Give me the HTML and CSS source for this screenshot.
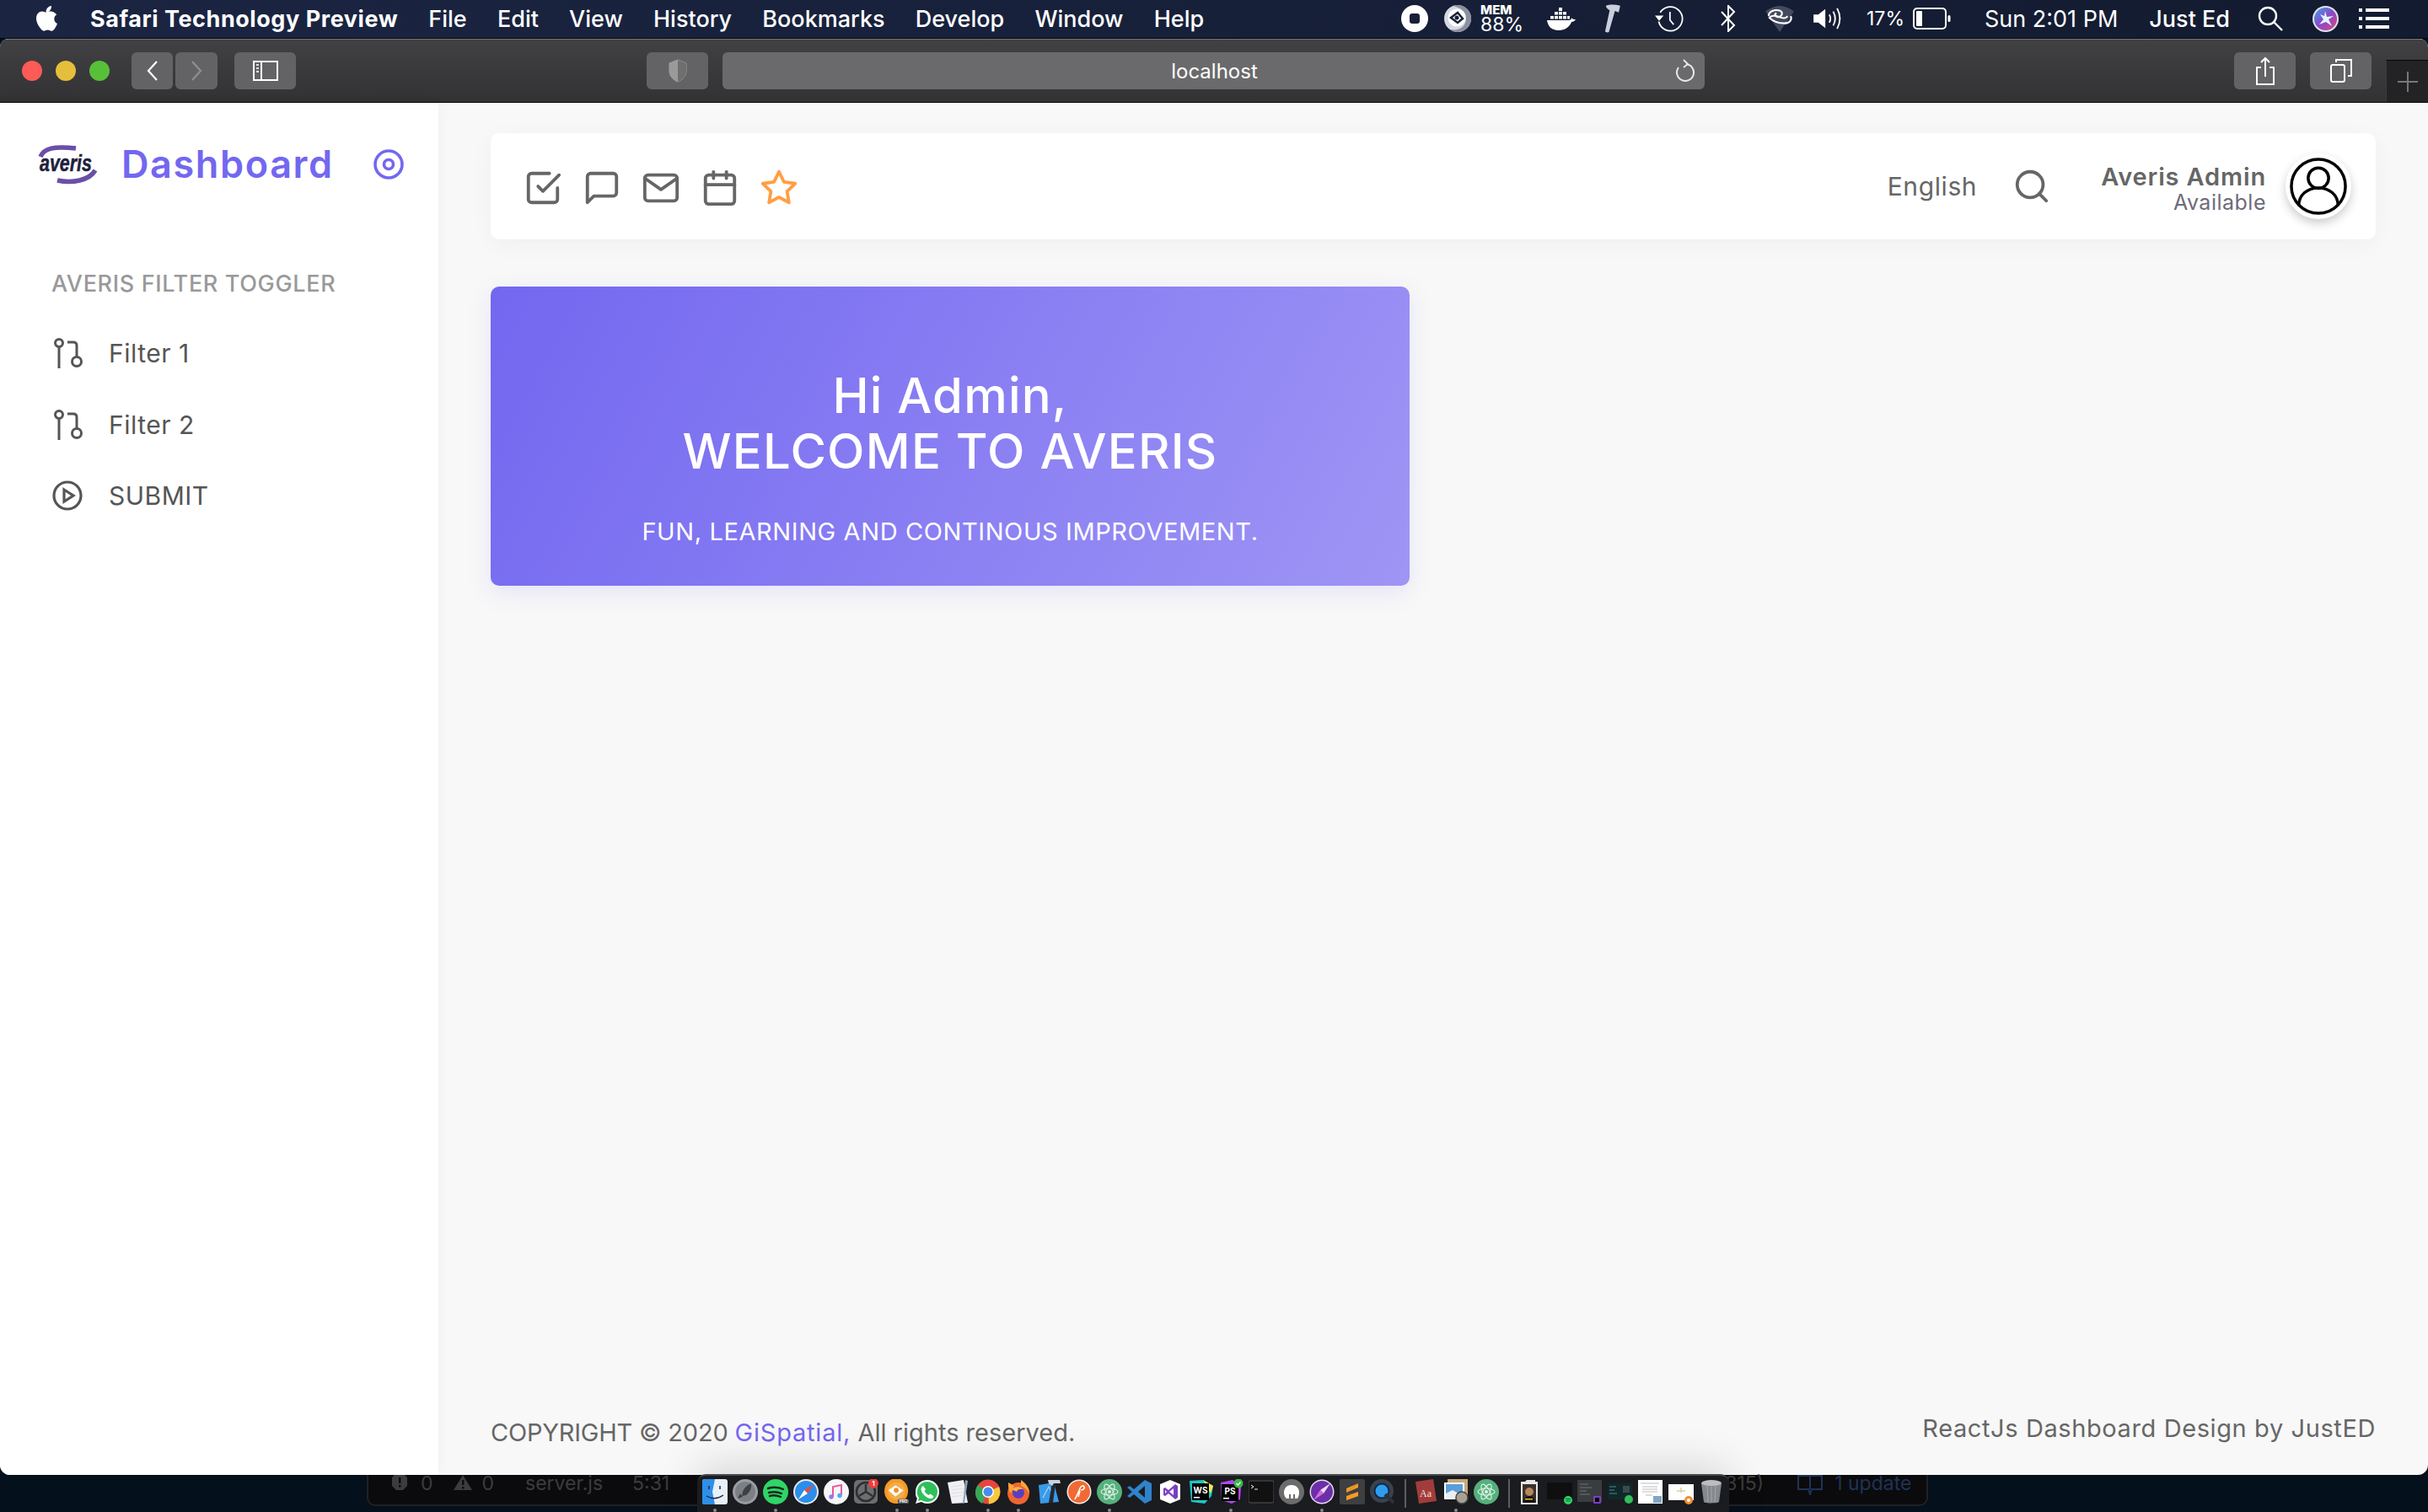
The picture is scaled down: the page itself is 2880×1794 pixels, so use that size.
FILE: index.html
```html
<!DOCTYPE html>
<html lang="en">
<head>
<meta charset="utf-8">
<title>Averis Dashboard</title>
<link rel="stylesheet" href="styles.css">
</head>
<body>
<div class="screen">
  <header class="menubar">
    <svg class="apple" viewBox="0 0 26 32"><path fill="#fff" d="M19 1c.2 2-.5 3.800-1.600 5.200-1.200 1.400-3 2.500-4.800 2.300-.3-1.900.6-3.800 1.600-5C15.400 2 17.400 1 19 1zM25.300 11.300c-1.700 1-3 2.900-3 5.200 0 2.800 1.700 4.700 3.700 5.500-.7 2-1.600 3.800-2.800 5.500-1.100 1.500-2.300 3.200-4.200 3.200-1.800 0-2.400-1.100-4.500-1.100-2.200 0-2.800 1.100-4.500 1.100-1.800 0-3.100-1.700-4.300-3.400C3.700 24.900 1 20.300 1 16c0-5.500 3.500-8.400 7-8.400 1.900 0 3.400 1.200 4.500 1.200 1.100 0 2.900-1.300 5-1.300 1.400 0 4.800.4 7.800 3.800z"/></svg>
    <nav class="menu">
      <span class="menu-app">Safari Technology Preview</span>
      <span>File</span><span>Edit</span><span>View</span><span>History</span><span>Bookmarks</span><span>Develop</span><span>Window</span><span>Help</span>
    </nav>
    <div class="status">
      <svg class="st-stop" viewBox="0 0 32 32"><circle cx="16" cy="16" r="16" fill="#fff"/><rect x="10" y="10" width="12" height="12" rx="3" fill="#182037"/></svg>
      <svg class="st-eye" viewBox="0 0 32 32"><circle cx="16" cy="16" r="16" fill="#d6d9e4"/><path d="M16 0a16 16 0 0 1 0 32c-4 0-7-1-9-3 10 2 19-3 19-13S18 3 10 1c2-1 4-1 6-1z" fill="#8b8f9e"/><circle cx="15" cy="15" r="10.500" fill="#fff"/><path d="M8 15l8-6 6 7-6 5z" fill="none" stroke="#182037" stroke-width="2.500"/><circle cx="15" cy="15" r="2.500" fill="#182037"/></svg>
      <div class="st-mem"><span class="mem-top">MEM</span><span class="mem-val">88%</span></div>
      <svg class="st-docker" viewBox="0 0 36 30"><g fill="#fff"><rect x="15" y="2" width="4" height="4"/><rect x="10" y="7" width="4" height="3.500"/><rect x="15" y="7" width="4" height="3.500"/><rect x="20" y="7" width="4" height="3.500"/><rect x="5" y="12" width="4" height="3.500"/><rect x="10" y="12" width="4" height="3.500"/><rect x="15" y="12" width="4" height="3.500"/><rect x="20" y="12" width="4" height="3.500"/><rect x="25" y="12" width="3" height="3.500"/><path d="M1 17h26c2 0 3-1 3-3 1 2 3 2 5 2-1 2-3 3-5 3-2 6-8 10-15 10-9 0-13-5-14-12z"/></g></svg>
      <svg class="st-hammer" viewBox="0 0 22 38"><path fill="#c9cfdc" d="M3 2c5-2 12-2 19 0l-2 9-5-2-8 28c-2 1-4 0-5-1l6-28C6 7 3 5 3 2z"/></svg>
      <svg class="st-time" viewBox="0 0 37 36" fill="none" stroke="#fff" stroke-width="2"><path d="M7 10a16 16 0 1 1-2 12"/><path d="M0 14l5.500 7 6-7z" fill="#fff" stroke="none"/><path d="M20 9v11l5 6"/></svg>
      <svg class="st-bt" viewBox="0 0 18 32" fill="none" stroke="#fff" stroke-width="2"><path d="M1 8l15 16-7 7V1l7 7L1 24"/></svg>
      <svg class="st-wifi" viewBox="0 0 36 34"><path d="M0 8Q18-6 36 8L18 34z" fill="#444b5e"/><path d="M4 14c0-6 8-9 14-7 5 2 3 8-2 8-4 0-5-4-2-5M32 14c2 5-2 9-8 9-8 0-14-2-19-7 2-3 8-3 12-1 6 2 8 2 11-1" fill="none" stroke="#fff" stroke-width="2.200"/></svg>
      <svg class="st-vol" viewBox="0 0 34 30"><path d="M0 10h6L15 3v24l-9-7H0z" fill="#fff"/><path d="M20 10q3 5 0 10M25 6q5 9 0 18M30 2q7 13 0 26" fill="none" stroke="#fff" stroke-width="2"/></svg>
      <span class="st-pct">17%</span>
      <svg class="st-bat" viewBox="0 0 45 26"><rect x="1" y="1" width="38" height="24" rx="4" fill="none" stroke="#fff" stroke-width="2"/><rect x="4" y="4" width="7" height="18" rx="1" fill="#fff"/><rect x="41.500" y="9" width="3" height="8" rx="1.500" fill="#fff"/></svg>
      <span class="st-clock">Sun 2:01 PM</span>
      <span class="st-user">Just Ed</span>
      <svg class="st-search" viewBox="0 0 30 30" fill="none" stroke="#fff" stroke-width="2.400"><circle cx="12" cy="12" r="10"/><path d="M19 19l10 10"/></svg>
      <svg class="st-siri" viewBox="0 0 31 31"><defs><linearGradient id="siri" x1="0" y1="0" x2="1" y2="1"><stop offset="0" stop-color="#3ea0e8"/><stop offset=".5" stop-color="#8a49c9"/><stop offset="1" stop-color="#e0457f"/></linearGradient></defs><circle cx="15.500" cy="15.500" r="15.500" fill="#dfe3ea"/><circle cx="15.500" cy="15.500" r="13.500" fill="url(#siri)"/><path d="M15 6l2 7 8-1-6 4 4 8-7-5-8 3 5-6-4-6 5 2z" fill="#dff6ff"/></svg>
      <svg class="st-list" viewBox="0 0 36 26" fill="#fff"><rect x="0" y="1" width="4" height="4"/><rect x="0" y="11" width="4" height="4"/><rect x="0" y="21" width="4" height="4"/><rect x="8" y="1" width="28" height="4"/><rect x="8" y="11" width="28" height="4"/><rect x="8" y="21" width="28" height="4"/></svg>
    </div>
  </header>

  <div class="window">
    <div class="toolbar">
      <span class="light light-red"></span><span class="light light-yellow"></span><span class="light light-green"></span>
      <button class="tb tb-back"><svg viewBox="0 0 16 26" fill="none" stroke="#fff" stroke-width="2.200"><path d="M13 2L3 13l10 11"/></svg></button>
      <button class="tb tb-fwd"><svg viewBox="0 0 16 26" fill="none" stroke="#8f8f8f" stroke-width="2.200"><path d="M3 2l10 11L3 24"/></svg></button>
      <button class="tb tb-side"><svg viewBox="0 0 30 24" fill="none" stroke="#fff" stroke-width="2"><rect x="1" y="1" width="28" height="22"/><path d="M10 1v22"/><path d="M4 5h3M4 9h3M4 13h3" stroke="#ddd"/></svg></button>
      <button class="tb tb-shield"><svg viewBox="0 0 22 28"><path d="M11 1l10 4v9c0 7-5 11-10 13C6 25 1 21 1 14V5z" fill="#8e8e8e" stroke="#a5a5a5"/><path d="M11 1v26C6 25 1 21 1 14V5z" fill="#9a9a9a"/><path d="M11 1l10 4v9c0 7-5 11-10 13z" fill="#6f6f6f"/></svg></button>
      <div class="url">
        <span class="url-text">localhost</span>
        <svg class="url-reload" viewBox="0 0 24 28" fill="none" stroke="#e8e8e8" stroke-width="2"><path d="M14 6a10 10 0 1 1-9 4"/><path d="M11 1l5 5-5 4" stroke-width="1.800"/></svg>
      </div>
      <button class="tb tb-share"><svg viewBox="0 0 22 34" fill="none" stroke="#fff" stroke-width="2"><path d="M6 13H1v20h20V13h-5"/><path d="M11 24V2M6 7l5-5 5 5"/></svg></button>
      <button class="tb tb-tabs"><svg viewBox="0 0 26 28" fill="none" stroke="#fff" stroke-width="2"><rect x="1" y="7" width="16" height="20" rx="2"/><path d="M7 4V1h18v19h-4"/></svg></button>
      <div class="newtab"><svg viewBox="0 0 24 24" stroke="#777" stroke-width="2"><path d="M12 0v24M0 12h24"/></svg></div>
    </div>

    <div class="app">
      <aside class="sidebar">
        <div class="brand">
          <svg class="logo" viewBox="0 0 68 48"><path d="M2 15C6 5 18 2 44 5" fill="none" stroke="#6a4fa8" stroke-width="5.500"/><path d="M22 43c18 4 38 0 45-12" fill="none" stroke="#6a4fa8" stroke-width="5.500"/><text x="1" y="32" class="logo-text" textLength="62" lengthAdjust="spacingAndGlyphs">averis</text></svg>
          <span class="brand-name">Dashboard</span>
          <svg class="target" viewBox="0 0 36 36" fill="none" stroke="#7367f0" stroke-width="3.600"><circle cx="18" cy="18" r="16"/><circle cx="18" cy="18" r="5.500"/></svg>
        </div>
        <div class="nav-title">AVERIS FILTER TOGGLER</div>
        <a class="nav-row"><svg class="nav-icon" viewBox="0 0 36 36" fill="none" stroke="#555" stroke-width="3"><circle cx="8" cy="6" r="4.500"/><path d="M8 11v25"/><circle cx="29" cy="28" r="5.500"/><path d="M29 22V9q0-4-4-4h-7"/></svg><span>Filter 1</span></a>
        <a class="nav-row"><svg class="nav-icon" viewBox="0 0 36 36" fill="none" stroke="#555" stroke-width="3"><circle cx="8" cy="6" r="4.500"/><path d="M8 11v25"/><circle cx="29" cy="28" r="5.500"/><path d="M29 22V9q0-4-4-4h-7"/></svg><span>Filter 2</span></a>
        <a class="nav-row"><svg class="nav-icon" viewBox="0 0 36 36" fill="none" stroke="#555" stroke-width="3.200"><circle cx="18" cy="18" r="16"/><path d="M14 11l11 7-11 7z"/></svg><span>SUBMIT</span></a>
      </aside>

      <main class="main">
        <div class="topbar">
          <div class="quick">
            <svg class="feather" viewBox="0 0 24 24"><polyline points="9 11 12 14 22 4"/><path d="M21 12v7a2 2 0 0 1-2 2H5a2 2 0 0 1-2-2V5a2 2 0 0 1 2-2h11"/></svg>
            <svg class="feather" viewBox="0 0 24 24"><path d="M21 15a2 2 0 0 1-2 2H7l-4 4V5a2 2 0 0 1 2-2h14a2 2 0 0 1 2 2z"/></svg>
            <svg class="feather" viewBox="0 0 24 24"><path d="M4 4h16c1.100 0 2 .9 2 2v12c0 1.100-.9 2-2 2H4c-1.100 0-2-.9-2-2V6c0-1.100.9-2 2-2z"/><polyline points="22,6 12,13 2,6"/></svg>
            <svg class="feather" viewBox="0 0 24 24"><rect x="3" y="4" width="18" height="18" rx="2"/><line x1="16" y1="2" x2="16" y2="6"/><line x1="8" y1="2" x2="8" y2="6"/><line x1="3" y1="10" x2="21" y2="10"/></svg>
            <svg class="feather feather-star" viewBox="0 0 24 24"><polygon points="12 2 15.090 8.260 22 9.270 17 14.140 18.180 21.020 12 17.770 5.820 21.020 7 14.140 2 9.270 8.910 8.260 12 2"/></svg>
          </div>
          <div class="top-right">
            <span class="lang">English</span>
            <svg class="feather top-search" viewBox="0 0 24 24"><circle cx="11" cy="11" r="8"/><line x1="21" y1="21" x2="16.650" y2="16.650"/></svg>
            <div class="user">
              <span class="user-name">Averis Admin</span>
              <span class="user-state">Available</span>
            </div>
            <div class="avatar"><svg viewBox="0 0 70 70" fill="none" stroke="#000" stroke-width="3.600"><circle cx="35" cy="35" r="33"/><circle cx="35" cy="25" r="12.500"/><path d="M11 59c0-14 11-22 24-22s24 8 24 22"/></svg></div>
          </div>
        </div>

        <section class="hero">
          <h1 class="hero-title">Hi Admin,<br>WELCOME TO AVERIS</h1>
          <p class="hero-sub">FUN, LEARNING AND CONTINOUS IMPROVEMENT.</p>
        </section>

        <footer class="footer">
          <span class="copy"><span class="copy-lead">COPYRIGHT © 2020 </span><a class="copy-link">GiSpatial,</a> All rights reserved.</span>
          <span class="credit">ReactJs Dashboard Design by JustED</span>
        </footer>
      </main>
    </div>
  </div>

  <div class="desktop">
    <div class="ghost">
      <svg class="g-err" viewBox="0 0 18 18"><path d="M3 0h12l3 3v10l-5 5H5l-5-5V3z" fill="#3c3c3c"/><rect x="8" y="3" width="2.500" height="7" fill="#0c0c0e"/><rect x="8" y="12" width="2.500" height="2.500" fill="#0c0c0e"/></svg>
      <span class="g-n1">0</span>
      <svg class="g-warn" viewBox="0 0 22 18"><path d="M11 0l11 18H0z" fill="#3c3c3c"/><rect x="10" y="6" width="2.500" height="6" fill="#0c0c0e"/><rect x="10" y="14" width="2.500" height="2.500" fill="#0c0c0e"/></svg>
      <span class="g-n2">0</span>
      <span class="g-file">server.js</span>
      <span class="g-pos">5:31</span>
      <span class="g-315">315)</span>
      <svg class="g-book" viewBox="0 0 30 24" fill="none" stroke="#1e3357" stroke-width="2"><path d="M1 1h28v16H17l-2 6-2-6H1zM15 1v16"/></svg>
      <span class="g-up">1 update</span>
    </div>
  </div>

  <div class="dock">
    <div class="slot on"><svg viewBox="0 0 30 30"><rect width="30" height="30" rx="3" fill="#e8f0f8"/><path d="M0 3a3 3 0 0 1 3-3h12l-3 15 3 15H3a3 3 0 0 1-3-3z" fill="#2d8fe8"/><path d="M8 8v4M21 8v4" stroke="#1b2a44" stroke-width="1.500"/><path d="M5 20q10 6 20-1" fill="none" stroke="#1b2a44" stroke-width="1.300"/></svg></div>
    <div class="slot"><svg viewBox="0 0 30 30"><circle cx="15" cy="15" r="15" fill="#9a9ea3"/><circle cx="15" cy="15" r="12" fill="#7c8085"/><path d="M22 5c1 6-2 11-6 14l-5 1 1-5C14 10 17 7 22 5zM9 17l-3 6 6-2z" fill="#3d4045"/></svg></div>
    <div class="slot on"><svg viewBox="0 0 30 30"><circle cx="15" cy="15" r="15" fill="#2fd566"/><path d="M6 11q9-3 18 1M7 16q8-2 15 1M8 20q6-2 13 1" fill="none" stroke="#16291c" stroke-width="2.400" stroke-linecap="round"/></svg></div>
    <div class="slot"><svg viewBox="0 0 30 30"><circle cx="15" cy="15" r="15" fill="#e6eaf0"/><circle cx="15" cy="15" r="13" fill="#2b8eea"/><path d="M24 6l-7 11-4-4z" fill="#f04a3e"/><path d="M6 24l7-11 4 4z" fill="#fff"/></svg></div>
    <div class="slot"><svg viewBox="0 0 30 30"><circle cx="15" cy="15" r="15" fill="#f6f6f8"/><path d="M11 21V9l10-2v12" fill="none" stroke="#e85a9a" stroke-width="2"/><circle cx="9" cy="21" r="2.700" fill="#8a7cf0"/><circle cx="19" cy="19.500" r="2.700" fill="#55a8ee"/></svg></div>
    <div class="slot"><svg viewBox="0 0 30 30"><rect width="28" height="28" y="1" rx="5" fill="#6c6e70"/><circle cx="14" cy="15" r="11" fill="none" stroke="#2e2f31" stroke-width="2.600"/><path d="M14 15V6M14 15L6 20M14 15l8 5" stroke="#2e2f31" stroke-width="2.400"/><circle cx="23" cy="5" r="6" fill="#ee3d3a"/><text x="23" y="8" class="badge-text">1</text></svg></div>
    <div class="slot on"><svg viewBox="0 0 32 32"><ellipse cx="15" cy="15" rx="15" ry="16" fill="#f69a23"/><circle cx="15" cy="15" r="11" fill="#f2ac4c"/><path d="M5 14L14 8l10 6-10 8z" fill="#fff"/><circle cx="15" cy="14" r="3" fill="#ee8f1e"/><rect x="17" y="25" width="14" height="6" rx="2" fill="#55585c"/><text x="24" y="30" class="pro-text">PRO</text></svg></div>
    <div class="slot on"><svg viewBox="0 0 30 30"><path d="M15 1a14 14 0 0 1 0 28c-3 0-5-1-7-2l-7 2 2-6C1 21 1 18 1 15 1 7 7 1 15 1z" fill="#fff"/><path d="M15 3a12 12 0 0 1 0 24c-3 0-5-1-7-2l-4 1 1-4C3 20 3 18 3 15 3 8 8 3 15 3z" fill="#2fc05a"/><path d="M10 8l3 4-1.500 2c1 2 3 4 5 5l2-1.500 4 3c-1 3-4 3-6 2-5-2-8-6-9-10 0-2 1-4 2.500-4.500z" fill="#fff"/></svg></div>
    <div class="slot"><svg viewBox="0 0 30 30"><path d="M3 4l19-3 5 27-19 1z" fill="#f1f1f3"/><path d="M24 1l3 1-4 26-2 1z" fill="#8fa3bd"/><path d="M7 9l14-2M7 13l15-2M8 17l15-2M8 21l15-2" stroke="#dadade" stroke-width=".8"/></svg></div>
    <div class="slot on"><svg viewBox="0 0 30 30"><circle cx="15" cy="15" r="14.500" fill="#e6463d"/><path d="M15 15L28 9a14.500 14.500 0 0 1-12 20.500z" fill="#f6c93c"/><path d="M15 15L8 29A14.500 14.500 0 0 1 3 7z" fill="#3aa757"/><circle cx="15" cy="15" r="7" fill="#fff"/><circle cx="15" cy="15" r="5.500" fill="#4a8bf0"/></svg></div>
    <div class="slot on"><svg viewBox="0 0 30 30"><circle cx="15" cy="17" r="13" fill="#f0652f"/><path d="M18 1c6 4 10 9 10 16-3-5-6-8-10-9zM3 4c0 5 0 9 3 13L10 8z" fill="#ffa436"/><circle cx="15" cy="16" r="7" fill="#5a3fc0"/><path d="M7 12q8-6 14 0-7-1-8 3z" fill="#ffb23c"/></svg></div>
    <div class="slot"><svg viewBox="0 0 30 30"><path d="M3 7l18-3 6 23-22 2z" fill="#3a9ae8"/><path d="M8 22L15 9l6 12" fill="none" stroke="#a8d4f6" stroke-width="1.200"/><path d="M15 28l4-24 4 1-3 23z" fill="#232a33"/><path d="M14 1h14l1 4-8 0-2 3-4-3z" fill="#cbd2da"/></svg></div>
    <div class="slot"><svg viewBox="0 0 30 30"><circle cx="15" cy="15" r="14.500" fill="#f2f2f2"/><circle cx="15" cy="15" r="13" fill="#f26a33"/><path d="M10 24c3-6 5-10 6-13 1-3 4-4 5-2s-1 4-4 4M16 14l-2 7" fill="none" stroke="#fff" stroke-width="1.600"/></svg></div>
    <div class="slot on"><svg viewBox="0 0 30 30"><circle cx="15" cy="15" r="15" fill="#55b07c"/><g fill="none" stroke="#e1f3e8" stroke-width="1.100"><ellipse cx="15" cy="15" rx="10" ry="4" transform="rotate(60 15 15)"/><ellipse cx="15" cy="15" rx="10" ry="4" transform="rotate(-60 15 15)"/><ellipse cx="15" cy="15" rx="10" ry="4"/></g><circle cx="15" cy="15" r="2" fill="#e1f3e8"/></svg></div>
    <div class="slot"><svg viewBox="0 0 30 30"><path d="M21 1l8 4v20l-8 4L8 18l-5 4-3-2 6-5-6-5 3-2 5 4z" fill="#2f83cb"/><path d="M21 8v14l-8-7z" fill="#1b1c1f"/></svg></div>
    <div class="slot"><svg viewBox="0 0 30 30"><path d="M15 1l12 5v18l-12 5-12-5V6z" fill="#fff"/><path d="M21 6l3 2v14l-3 2-8-7-4 3-2-1V11l2-1 4 3z" fill="#7a3fc2"/><path d="M19 11v8l-5-4z" fill="#fff"/><path d="M9 13v4l2-2z" fill="#fff"/></svg></div>
    <div class="slot"><svg viewBox="0 0 30 30"><path d="M2 2l16-1 12 7-2 12-8 9-16-2z" fill="#21c4c6"/><path d="M18 1l12 7-3 9z" fill="#f4e94b"/><rect x="5" y="5" width="20" height="20" fill="#000"/><text x="15" y="17" class="ide-text">WS</text><rect x="7" y="21" width="7" height="1.500" fill="#fff"/></svg></div>
    <div class="slot on"><svg viewBox="0 0 30 30"><path d="M3 4l14-3 10 8-1 15-10 5-12-4z" fill="#b345f1"/><rect x="4" y="6" width="20" height="20" fill="#000"/><text x="14" y="18" class="ide-text">PS</text><rect x="6" y="22" width="7" height="1.500" fill="#fff"/><circle cx="24" cy="5" r="5.500" fill="#3bb54a"/><path d="M21.500 5l2 2 3-3.500" fill="none" stroke="#fff" stroke-width="1.300"/></svg></div>
    <div class="slot"><svg viewBox="0 0 30 30"><rect y="2" width="30" height="26" rx="2" fill="#111" stroke="#555"/><path d="M3 7l3 2-3 2M7 12h4" fill="none" stroke="#eee" stroke-width="1"/></svg></div>
    <div class="slot"><svg viewBox="0 0 30 30"><circle cx="15" cy="15" r="15" fill="#6c6c6c"/><path d="M6 16c0-6 4-9 9-9 6 0 9 4 9 9 0 3-1 5-2 7h-3v-5h-2v5h-3v-5h-2v5H9c-2-2-3-4-3-7z" fill="#fff"/></svg></div>
    <div class="slot on"><svg viewBox="0 0 30 30"><circle cx="15" cy="15" r="14.500" fill="#e3dff0"/><circle cx="15" cy="15" r="13" fill="#6b2fa8"/><path d="M25 5l-8 12-4-4z" fill="#f3d7f5"/><path d="M5 25l8-12 4 4z" fill="#d66ae0"/></svg></div>
    <div class="slot"><svg viewBox="0 0 30 30"><rect width="30" height="30" rx="2" fill="#3e3f41"/><path d="M22 5L8 11v5l14 4-14 5v-3l9-3-9-3" fill="#f79a25"/><path d="M22 5v5L8 16zM22 15v5L8 25v-5z" fill="#f79a25"/></svg></div>
    <div class="slot"><svg viewBox="0 0 30 30"><circle cx="14" cy="14" r="14" fill="#39424e"/><circle cx="14" cy="14" r="8.500" fill="#2f9cf0" stroke="#122a44" stroke-width="2"/><path d="M18 18l10 10" stroke="#2c323a" stroke-width="4"/></svg></div>
    <div class="sep"></div>
    <div class="slot"><svg viewBox="0 0 30 30"><path d="M3 3l21-3 4 26-21 3z" fill="#a23c3c"/><text x="15" y="21" class="dict-text">Aa</text></svg></div>
    <div class="slot on"><svg viewBox="0 0 30 30"><rect x="5" y="0" width="24" height="19" fill="#c7a97a"/><rect x="1" y="4" width="24" height="20" fill="#fff"/><rect x="3" y="6" width="20" height="16" fill="#5b9ed8"/><path d="M3 17l8-4 12 7v2H3z" fill="#e9eef2"/><circle cx="22" cy="22" r="7" fill="#a7a195" stroke="#444" stroke-width="1.500"/></svg></div>
    <div class="slot"><svg viewBox="0 0 30 30"><circle cx="15" cy="15" r="15" fill="#55b07c"/><g fill="none" stroke="#e1f3e8" stroke-width="1.100"><ellipse cx="15" cy="15" rx="10" ry="4" transform="rotate(60 15 15)"/><ellipse cx="15" cy="15" rx="10" ry="4" transform="rotate(-60 15 15)"/><ellipse cx="15" cy="15" rx="10" ry="4"/></g><circle cx="15" cy="15" r="2" fill="#e1f3e8"/></svg></div>
    <div class="sep"></div>
    <div class="slot"><svg viewBox="0 0 30 30"><path d="M5 3h5l2-2h10v2h3v27H5z" fill="#e7e7e7"/><rect x="7" y="6" width="16" height="22" fill="#3a3128"/><circle cx="15" cy="15" r="5" fill="#b58761"/><path d="M8 28c1-6 4-8 7-8s6 2 7 8z" fill="#141210"/><rect x="10" y="23" width="9" height="1.500" fill="#e8c23c"/></svg></div>
    <div class="slot"><svg viewBox="0 0 30 30"><rect y="4" width="30" height="20" fill="#0f0f10"/><circle cx="25" cy="25" r="5" fill="#2fd566"/><path d="M22 23.500q3-1 6 .5M22.500 26q3-1 5 .3" stroke="#143" stroke-width=".9" fill="none"/></svg></div>
    <div class="slot"><svg viewBox="0 0 30 30"><rect y="1" width="29" height="26" fill="#3a3d40"/><path d="M3 6h10M3 10h14M3 14h8M3 18h12" stroke="#6f747a"/><rect x="19" y="20" width="9" height="9" rx="1" fill="#7a3fc2"/><rect x="21" y="22" width="5" height="5" fill="#000"/></svg></div>
    <div class="slot"><svg viewBox="0 0 30 30"><rect y="5" width="29" height="19" fill="#10282b"/><path d="M2 9h8M2 13h6M2 17h9" stroke="#4a8a8f"/><rect x="18" y="8" width="8" height="8" fill="#3b4a4c"/><circle cx="25" cy="24" r="5" fill="#2fc05a"/></svg></div>
    <div class="slot"><svg viewBox="0 0 30 30"><rect y="1" width="29" height="28" fill="#fff"/><path d="M3 5h22M5 9h18M5 12h18M5 15h18M9 19h8" stroke="#bbb"/><rect x="18" y="20" width="10" height="8" fill="#7ea6c8"/></svg></div>
    <div class="slot"><svg viewBox="0 0 30 30"><rect y="6" width="30" height="19" fill="#fff"/><path d="M15 10v6M10 14h10" stroke="#d9cf9f" stroke-width="1.500"/><circle cx="24" cy="25" r="5" fill="#f09030"/><circle cx="24" cy="25" r="2" fill="#fff"/></svg></div>
    <div class="slot"><svg viewBox="0 0 30 30"><ellipse cx="15" cy="5" rx="12" ry="4" fill="#b9bcc0"/><path d="M3 5l3 22c1 2 17 2 18 0l3-22c-3 4-21 4-24 0z" fill="#85888c"/><path d="M10 8l1 19M20 8l-1 19M15 9v18" stroke="#a6a9ad"/></svg></div>
  </div>
</div>
</body>
</html>
```

FILE: styles.css
```css
* { box-sizing: border-box; }
html, body { margin: 0; padding: 0; }
body { font-family: "Inter", "Liberation Sans", sans-serif; background: #05121e; }

.screen {
  position: relative;
  display: flex;
  flex-direction: column;
  width: 2880px;
  height: 1794px;
  overflow: hidden;
  background: #04101b;
}

/* macOS menu bar */
.menubar {
  display: flex;
  align-items: center;
  flex: 0 0 46px;
  height: 46px;
  padding: 0 46px 1px 42px;
  color: #fff;
  background: linear-gradient(90deg, #1b2542, #131b30);
  border-bottom: 1px solid #05080f;
}
.apple { width: 26px; height: 32px; margin-right: 39px; }
.menu { display: flex; gap: 36.200px; font-size: 27px; font-weight: 500; }
.menu-app { font-weight: 700; letter-spacing: .55px; }
.status { display: flex; align-items: center; margin-left: auto; font-size: 27px; font-weight: 400; }
.st-stop { width: 32px; height: 32px; }
.st-eye { width: 32px; height: 32px; margin-left: 19px; }
.st-mem { display: flex; flex-direction: column; width: 49px; margin-left: 11px; }
.mem-top { font-size: 15px; line-height: 14px; font-weight: 800; }
.mem-val { font-size: 23px; line-height: 20px; }
.st-docker { width: 36px; height: 30px; margin-left: 29px; }
.st-hammer { width: 22px; height: 34px; margin-left: 31px; }
.st-time { width: 37px; height: 32px; margin-left: 38px; }
.st-bt { width: 18px; height: 32px; margin-left: 43px; }
.st-wifi { width: 36px; height: 32px; margin-left: 34px; }
.st-vol { width: 34px; height: 28px; margin-left: 21px; }
.st-pct { margin-left: 30px; font-size: 23px; }
.st-bat { width: 45px; height: 26px; margin-left: 10px; }
.st-clock { margin-left: 40px; }
.st-user { margin-left: 37px; font-weight: 500; }
.st-search { width: 30px; height: 30px; margin-left: 33px; }
.st-siri { width: 31px; height: 31px; margin-left: 35px; }
.st-list { width: 36px; height: 26px; margin-left: 24px; }

/* Safari window */
.window {
  display: flex;
  flex-direction: column;
  flex: 0 0 1704px;
  height: 1704px;
  border-radius: 10px 10px 12px 12px;
  overflow: hidden;
  background: #f8f8f8;
}
.toolbar {
  display: flex;
  align-items: flex-start;
  flex: 0 0 76px;
  height: 76px;
  padding: 15px 0 0 26px;
  background: linear-gradient(#414143, #323234);
  border-top: 1px solid #77777a;
  border-bottom: 1px solid #0a0a0a;
}
.light { width: 24px; height: 24px; margin: 10px 16px 0 0; border-radius: 50%; }
.light-red { background: #fc5b57; }
.light-yellow { background: #e5bf3c; }
.light-green { background: #57c038; }
.tb {
  display: flex;
  align-items: center;
  justify-content: center;
  height: 44px;
  padding: 0;
  border: 0;
  border-radius: 6px;
  background: #636365;
}
.tb-back { width: 49px; margin-left: 10px; }
.tb-fwd { width: 50px; margin-left: 3px; }
.tb-back svg, .tb-fwd svg { width: 16px; height: 26px; }
.tb-side { width: 73px; margin-left: 20px; }
.tb-side svg { width: 30px; height: 24px; }
.tb-shield { width: 73px; margin-left: 416px; }
.tb-shield svg { width: 22px; height: 28px; }
.url {
  position: relative;
  display: flex;
  align-items: center;
  justify-content: center;
  width: 1165px;
  height: 44px;
  margin-left: 17px;
  padding-left: 2px;
  border-radius: 6px;
  color: #fff;
  font-size: 24px;
  background: #6a6a6c;
}
.url-reload { position: absolute; right: 12px; top: 8px; width: 24px; height: 28px; }
.tb-share { width: 73px; margin-left: 628px; }
.tb-share svg { width: 22px; height: 34px; }
.tb-tabs { width: 73px; margin-left: 17px; }
.tb-tabs svg { width: 26px; height: 28px; }
.newtab {
  display: flex;
  align-items: center;
  justify-content: center;
  align-self: flex-end;
  width: 50px;
  height: 50px;
  margin-left: 17px;
  background: #232325;
  border-top: 1px solid #050505;
  border-left: 1px solid #3a3a3c;
}
.newtab svg { width: 24px; height: 24px; }

.app { display: flex; flex: 1; min-height: 0; }

/* Sidebar */
.sidebar {
  display: flex;
  flex-direction: column;
  flex: 0 0 520px;
  padding-top: 28px;
  background: #fff;
  box-shadow: 0 0 15px rgba(0, 0, 0, .04);
}
.brand { display: flex; align-items: center; height: 90px; padding-left: 46px; }
.logo { width: 68px; height: 48px; overflow: visible; }
.logo-text { font-family: "Liberation Sans", sans-serif; font-size: 27px; font-style: italic; font-weight: 700; fill: #221f3d; stroke: #221f3d; stroke-width: .5px; }
.brand-name { margin-left: 30px; font-size: 45px; line-height: 54px; font-weight: 600; letter-spacing: 1.6px; color: #7367f0; }
.target { width: 36px; height: 36px; margin-left: 47px; }
.nav-title {
  height: 34px;
  margin: 80px 0 23px 61px;
  font-size: 27px;
  line-height: 34px;
  font-weight: 500;
  letter-spacing: .65px;
  color: #999;
}
.nav-row {
  display: flex;
  align-items: center;
  height: 84.500px;
  padding-left: 62px;
  font-size: 30px;
  letter-spacing: .5px;
  color: #555;
}
.nav-icon { width: 36px; height: 36px; margin-right: 31px; }

/* Main column */
.main { display: flex; flex-direction: column; flex: 1; min-width: 0; padding: 36px 62px 0; }
.topbar {
  display: flex;
  align-items: center;
  justify-content: space-between;
  flex: 0 0 126px;
  padding: 0 29px 0 39px;
  border-radius: 10px;
  background: #fff;
  box-shadow: 0 6px 28px rgba(0, 0, 0, .04);
}
.quick { display: flex; gap: 24px; padding-top: 3px; }
.feather {
  width: 46px;
  height: 46px;
  fill: none;
  stroke: #666;
  stroke-width: 2;
  stroke-linecap: round;
  stroke-linejoin: round;
}
.feather-star { stroke: #ff9f43; }
.top-right { display: flex; align-items: center; }
.lang { font-size: 30px; letter-spacing: .6px; color: #666; }
.top-search { margin-left: 42px; }
.user { display: flex; flex-direction: column; align-items: flex-end; margin-left: 59px; padding-top: 6px; color: #666; }
.user-name { font-size: 29px; line-height: 33px; font-weight: 600; letter-spacing: .85px; }
.user-state { font-size: 25px; line-height: 29px; letter-spacing: .5px; color: #6e6b7b; }
.avatar {
  width: 78px;
  height: 78px;
  margin-left: 23px;
  padding: 5px;
  border-radius: 50%;
  background: #fff;
  box-shadow: 0 5px 12px rgba(0, 0, 0, .2);
}
.avatar svg { display: block; width: 68px; height: 68px; }

.hero {
  flex: 0 0 355px;
  width: 1090px;
  margin-top: 56px;
  padding-top: 96px;
  text-align: center;
  color: #fff;
  border-radius: 10px;
  background: linear-gradient(118deg, #7367f0, #9e95f5);
  box-shadow: 0 8px 28px rgba(115, 103, 240, .14);
}
.hero-title { margin: 0; font-size: 58px; line-height: 66px; font-weight: 500; letter-spacing: 1.2px; }
.hero-sub { margin: 43px 0 0; font-size: 29px; line-height: 40px; letter-spacing: .6px; }

.footer { display: flex; align-items: flex-end; justify-content: space-between; margin-top: auto; padding-bottom: 30px; color: #666; font-size: 29px; line-height: 40px; }
.copy-lead { letter-spacing: -.2px; }
.copy-link { letter-spacing: .8px; color: #7367f0; }
.credit { margin-bottom: 5px; letter-spacing: .6px; }

/* Desktop strip under the window */
.desktop { flex: 1; min-height: 0; }
.ghost {
  display: flex;
  align-items: flex-start;
  width: 1852px;
  height: 37px;
  margin-left: 435px;
  padding-top: 0;
  color: #3c3c3c;
  font-size: 23px;
  line-height: 20px;
  white-space: nowrap;
  background: #0b0b0d;
  border: 2px solid #212123;
  border-top: 0;
  border-radius: 0 0 10px 10px;
}
.g-err { width: 18px; height: 18px; margin-left: 28px; }
.g-n1 { margin-left: 16px; }
.g-warn { width: 22px; height: 18px; margin-left: 24px; }
.g-n2 { margin-left: 12px; }
.g-file { margin-left: 37px; }
.g-pos { margin-left: 35px; }
.g-315 { margin-left: 1252px; }
.g-book { width: 30px; height: 24px; margin-left: 40px; }
.g-up { margin-left: 14px; color: #1e3357; }

/* Dock */
.dock {
  position: absolute;
  left: 827px;
  bottom: 0;
  display: flex;
  align-items: flex-start;
  width: 1224px;
  height: 45px;
  padding: 4px 1px 0 3px;
  background: #1b1c1f;
  border-top: 2px solid #47484b;
  border-radius: 10px 10px 0 0;
  box-shadow: 0 -6px 50px rgba(0, 0, 0, .16);
}
.slot { position: relative; display: flex; justify-content: center; flex: 0 0 36px; height: 39px; }
.slot svg { width: 30px; height: 30px; }
.slot.on::after {
  content: "";
  position: absolute;
  left: 16px;
  bottom: 0;
  width: 4px;
  height: 4px;
  border-radius: 50%;
  background: #8a8a8a;
}
.sep { flex: 0 0 2px; height: 34px; margin: 0 5px 0 8px; background: #5c5d60; }
.badge-text { font: 700 8px "Inter", sans-serif; fill: #fff; text-anchor: middle; }
.pro-text { font: 700 5px "Inter", sans-serif; fill: #fff; text-anchor: middle; }
.ide-text { font: 700 10px "Inter", sans-serif; fill: #fff; text-anchor: middle; }
.dict-text { font: 400 12px "Liberation Serif", serif; fill: #f4e4d8; text-anchor: middle; }
```
